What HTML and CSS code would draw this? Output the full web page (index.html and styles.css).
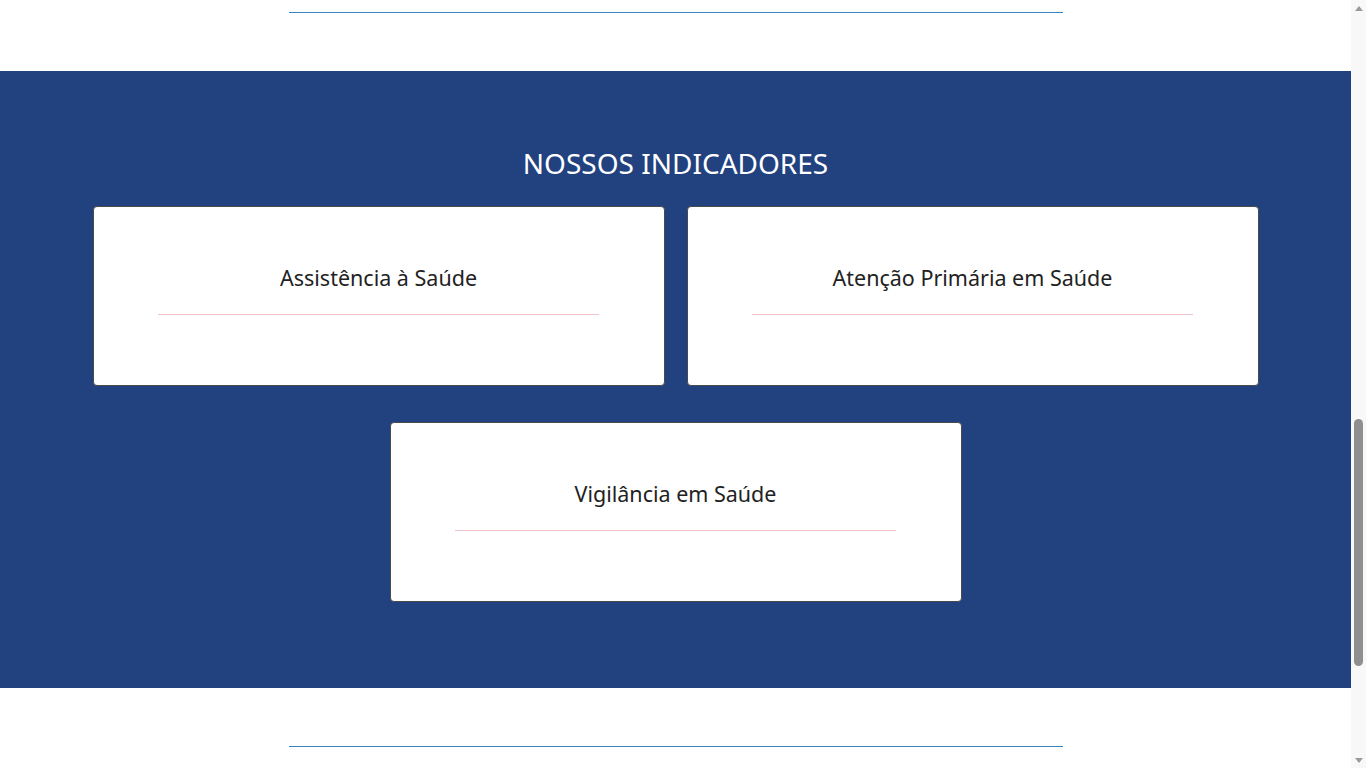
FILE: index.html
```html
<!DOCTYPE html>
<html lang="pt-BR">
<head>
<meta charset="utf-8">
<title>Nossos Indicadores</title>
<link rel="stylesheet" href="styles.css">
</head>
<body>
<div class="app">
  <div class="viewport" id="viewport">
    <div class="page-top"></div>
    <div class="divider-wrap"><div class="divider"></div></div>
    <section class="indicators">
      <h2 class="indicators-title">NOSSOS INDICADORES</h2>
      <div class="cards">
        <a class="card" href="#"><span class="card-title">Assistência à Saúde</span><span class="card-line"></span></a>
        <a class="card" href="#"><span class="card-title">Atenção Primária em Saúde</span><span class="card-line"></span></a>
        <a class="card" href="#"><span class="card-title">Vigilância em Saúde</span><span class="card-line"></span></a>
      </div>
    </section>
    <div class="divider-wrap divider-wrap-bottom"><div class="divider"></div></div>
    <div class="page-bottom"></div>
  </div>
  <div class="scrollbar" aria-hidden="true">
    <div class="sb-btn"><span class="sb-arrow sb-arrow-up"></span></div>
    <div class="sb-track"><div class="sb-thumb"></div></div>
    <div class="sb-btn"><span class="sb-arrow sb-arrow-down"></span></div>
  </div>
</div>
<script src="script.js"></script>
</body>
</html>
```

FILE: styles.css
```css
html, body {
  margin: 0;
  padding: 0;
  height: 100%;
  overflow: hidden;
  background: #ffffff;
  font-family: "Noto Sans", "Open Sans", "Liberation Sans", sans-serif;
}

.app {
  display: flex;
  height: 100vh;
}

.viewport {
  flex: 1;
  min-width: 0;
  overflow-y: scroll;
  overflow-x: hidden;
  scrollbar-width: none;
}

.viewport::-webkit-scrollbar {
  display: none;
}

.scrollbar {
  width: 15px;
  flex: 0 0 15px;
  background: #f8f8f8;
  display: flex;
  flex-direction: column;
}

.sb-btn {
  height: 15px;
  flex: 0 0 15px;
  display: flex;
  align-items: center;
  justify-content: center;
}

.sb-arrow {
  width: 0;
  height: 0;
  border-left: 4px solid transparent;
  border-right: 4px solid transparent;
}

.sb-arrow-up {
  border-bottom: 5px solid #9a9a9a;
  margin-top: 1px;
}

.sb-arrow-down {
  border-top: 5px solid #9a9a9a;
  margin-bottom: 1px;
}

.sb-track {
  flex: 1;
  padding-top: 404px;
}

.sb-thumb {
  width: 9px;
  height: 247px;
  margin: 0 auto;
  border-radius: 5px;
  background: #8f8f8f;
}

.page-top {
  height: 1268px;
}

.page-bottom {
  height: 293px;
}

.divider-wrap {
  display: flex;
  justify-content: center;
  padding-bottom: 58px;
}

.divider-wrap-bottom {
  padding-top: 58px;
  padding-bottom: 0;
}

.divider {
  width: 774px;
  height: 1px;
  background: #3a84c4;
}

.indicators {
  background: #21417f;
  padding: 75px 0 86px;
  display: flex;
  flex-direction: column;
  align-items: center;
}

.indicators-title {
  margin: 0 0 26px;
  color: #ffffff;
  font-size: 28px;
  line-height: 34px;
  font-weight: 400;
}

.cards {
  width: 1166px;
  display: flex;
  flex-wrap: wrap;
  justify-content: center;
  gap: 36px 22px;
}

.card {
  box-sizing: border-box;
  width: 572px;
  height: 180px;
  background: #ffffff;
  border: 1px solid #4a4a4a;
  border-radius: 4px;
  padding-top: 58px;
  display: flex;
  flex-direction: column;
  align-items: center;
  text-decoration: none;
}

.card-title {
  color: #222222;
  font-size: 21.5px;
  line-height: 25px;
}

.card-line {
  display: block;
  width: 441px;
  height: 1px;
  margin-top: 24px;
  background: #f2c4c8;
}
```

FILE: script.js
```js
var vp = document.getElementById('viewport');
vp.scrollTop = 1256;
window.addEventListener('load', function () { vp.scrollTop = 1256; });
```
